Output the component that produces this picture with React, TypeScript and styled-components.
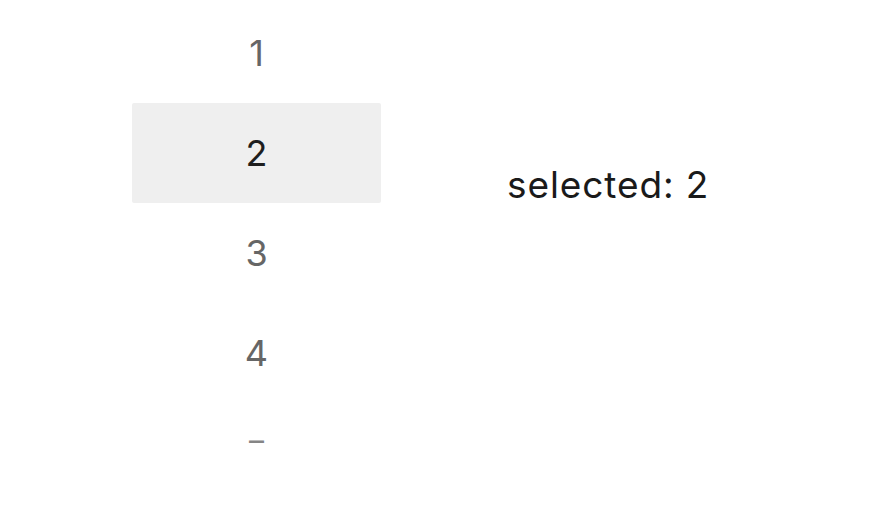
import React, { useState } from "react";
import styled, { createGlobalStyle } from "styled-components";

const GlobalStyle = createGlobalStyle`
  html, body {
    margin: 0;
    padding: 0;
    background: #ffffff;
  }
  body {
    font-family: Inter, "Liberation Sans", sans-serif;
  }
`;

const Page = styled.div`
  display: flex;
  flex-direction: row;
  align-items: flex-start;
  width: 871px;
  height: 507px;
  padding-left: 132px;
  padding-top: 3px;
  box-sizing: border-box;
  overflow: hidden;
`;

const Picker = styled.ul`
  list-style: none;
  margin: 0;
  padding: 0;
  width: 249px;
  display: flex;
  flex-direction: column;
`;

const PickerItem = styled.li<{ $active: boolean }>`
  height: 100px;
  display: flex;
  align-items: center;
  justify-content: center;
  font-size: 36px;
  color: ${(p) => (p.$active ? "#1e1e1e" : "#666666")};
  background: ${(p) => (p.$active ? "#efefef" : "transparent")};
  border-radius: 2px;
  cursor: pointer;
`;

// 마지막 줄은 잘려 보이는 대시
const Dash = styled.li`
  height: 74px;
  display: flex;
  align-items: center;
  justify-content: center;
  font-size: 30px;
  color: #858585;
`;

const Selected = styled.div`
  margin-left: 126px;
  margin-top: 159px;
  font-size: 37px;
  letter-spacing: 0.9px;
  color: #1a1a1a;
`;

export default function App() {
  const [value, setValue] = useState(2);

  return (
    <>
      <GlobalStyle />
      <Page>
        <Picker>
          {[1, 2, 3, 4].map((n) => (
            <PickerItem key={n} $active={n === value} onClick={() => setValue(n)}>
              {n}
            </PickerItem>
          ))}
          <Dash>–</Dash>
        </Picker>
        <Selected>selected: {value}</Selected>
      </Page>
    </>
  );
}
